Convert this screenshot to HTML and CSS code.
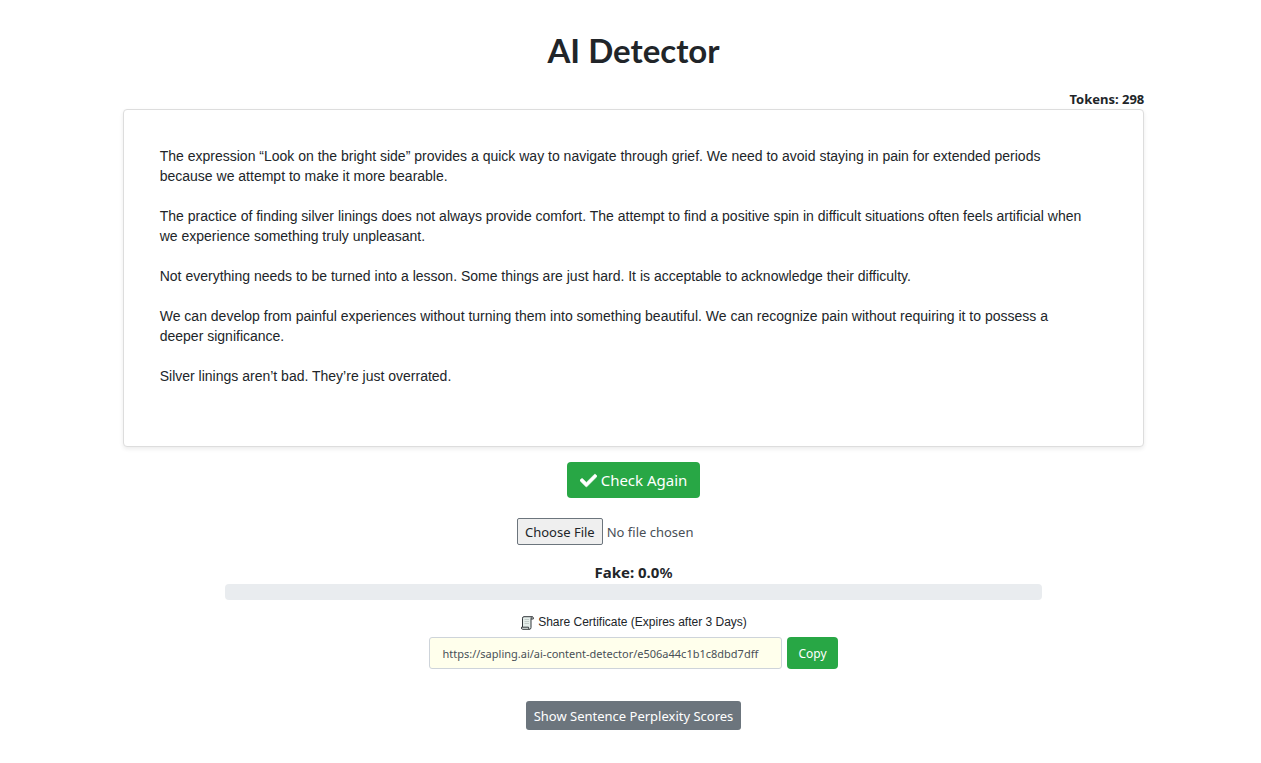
FILE: index.html
```html
<!DOCTYPE html>
<html lang="en">

<head>
  <meta charset="UTF-8">
  <meta name="viewport" content="width=device-width, initial-scale=1.0">
  <title>AI Detector</title>
  <link rel="stylesheet" href="styles.css">
</head>

<body>
  <main class="container">
    <h1>AI Detector</h1>
    <div class="tokens">Tokens: 298</div>
    <textarea class="editor" aria-label="Text to check" spellcheck="false">The expression “Look on the bright side” provides a quick way to navigate through grief. We need to avoid staying in pain for extended periods because we attempt to make it more bearable.

The practice of finding silver linings does not always provide comfort. The attempt to find a positive spin in difficult situations often feels artificial when we experience something truly unpleasant.

Not everything needs to be turned into a lesson. Some things are just hard. It is acceptable to acknowledge their difficulty.

We can develop from painful experiences without turning them into something beautiful. We can recognize pain without requiring it to possess a deeper significance.

Silver linings aren’t bad. They’re just overrated.</textarea>

    <button type="button" class="btn btn-check">
      <svg width="17" height="17" viewBox="0 0 512 512" fill="currentColor" stroke="currentColor" stroke-width="16" aria-hidden="true">
        <path d="M173.898 439.404l-166.400-166.400c-9.997-9.997-9.997-26.206 0-36.204l36.203-36.204c9.997-9.998 26.207-9.998 36.204 0L192 312.690 432.095 72.596c9.997-9.997 26.207-9.997 36.204 0l36.203 36.204c9.997 9.997 9.997 26.206 0 36.204l-294.400 294.401c-9.998 9.997-26.207 9.997-36.204-.001z"/>
      </svg>
      Check Again
    </button>

    <input type="file" class="file" aria-label="Choose a file to check">

    <div class="score" id="score">Fake: 0.0<span class="percent">%</span></div>
    <div class="progress" role="progressbar" aria-labelledby="score" aria-valuenow="0" aria-valuemin="0" aria-valuemax="100">
      <div class="progress-bar" style="width: 0%"></div>
    </div>

    <label class="share-label" for="share">
      <svg width="14" height="14" viewBox="0 0 14 14" aria-hidden="true">
        <path d="M2.500 1H12Q11 1.500 11 3V11.500Q11 13.400 9.500 13.400H3Z" fill="#e4edea"/>
        <path d="M2.500 11V2.200Q2.500 .7 4 .7H12Q13.300 .7 13.300 2V3H11M12 .7Q11 1.200 11 3V11.500Q11 13.300 9.500 13.300H2.800Q1.500 13.300 1.500 12V11.200H8.500Q8.500 13.300 9.500 13.300" fill="none" stroke="#32373a" stroke-width="1"/>
        <path d="M4.500 3.500H9M4.500 5.500H9M4.500 7.500H9" stroke="#c2ccc9" stroke-width="1"/>
      </svg>
      Share Certificate (Expires after 3 Days)
    </label>
    <div class="share">
      <input type="text" id="share" class="share-link" value="https://sapling.ai/ai-content-detector/e506a44c1b1c8dbd7dff" readonly>
      <button type="button" class="btn btn-copy">Copy</button>
    </div>

    <button type="button" class="btn btn-scores">Show Sentence Perplexity Scores</button>
  </main>
</body>

</html>
```

FILE: styles.css
```css
* {
  box-sizing: border-box;
}

body {
  margin: 0;
  padding-left: 6px;
  background-color: #fff;
  color: #212529;
  font-family: "Segoe UI", "Noto Sans", sans-serif;
}

.container {
  display: flex;
  flex-direction: column;
  align-items: center;
  width: 81.4%;
  max-width: 1140px;
  margin: auto;
  padding: 28px 0 32px;
}

h1 {
  margin: 0 0 18px;
  font-family: Lato, sans-serif;
  font-size: 33px;
  font-weight: 700;
  line-height: 44px;
}

.tokens {
  align-self: flex-end;
  font-size: 13px;
  font-weight: 700;
  line-height: 19px;
}

.editor {
  display: block;
  width: 100%;
  height: 338px;
  padding: 36px 58px 36px 36px;
  border: 1px solid #ddd;
  border-radius: 4px;
  box-shadow: 0 2px 4px rgba(0, 0, 0, 0.08);
  color: #212529;
  font-family: Arial, "Liberation Sans", sans-serif;
  font-size: 14px;
  line-height: 20px;
  resize: none;
}

.btn {
  display: flex;
  align-items: center;
  justify-content: center;
  border: 0;
  border-radius: 4px;
  background-color: #28a745;
  color: #fff;
  font-family: inherit;
}

.btn-check {
  gap: 4px;
  height: 36px;
  margin: 15px 0 20px;
  padding: 0 13px;
  font-size: 15px;
}

.file {
  width: 233px;
  color: #495057;
  font-family: inherit;
  font-size: 13px;
}

.file::file-selector-button {
  height: 27px;
  margin-right: 4px;
  padding: 0 7px;
  border: 1px solid #6c757d;
  border-radius: 2px;
  background-color: #efefef;
  color: #212529;
  font-family: inherit;
  font-size: 13px;
}

.score {
  margin: 16px 0 1px;
  font-size: 15px;
  font-weight: 700;
  line-height: 22px;
}

.percent {
  font-weight: 600;
}

.progress {
  width: 80%;
  height: 16px;
  border-radius: 4px;
  background-color: #e9ecef;
  overflow: hidden;
}

.progress-bar {
  height: 100%;
  background-color: #dc3545;
}

.share-label {
  display: flex;
  align-items: center;
  gap: 4px;
  margin: 14px 0 6px;
  font-family: Arial, "Liberation Sans", sans-serif;
  font-size: 12px;
  line-height: 17px;
}

.share {
  display: flex;
  gap: 5px;
}

.share-link {
  width: 353px;
  height: 32px;
  padding: 0 12px;
  border: 1px solid #ced4da;
  border-radius: 3px;
  background-color: #ffffec;
  color: #495057;
  font-family: inherit;
  font-size: 11px;
}

.btn-copy {
  height: 32px;
  padding: 0 11px;
  font-size: 12px;
}

.btn-scores {
  height: 29px;
  margin-top: 32px;
  padding: 0 8px;
  border-radius: 3px;
  background-color: #6c757d;
  font-size: 13px;
}
```
